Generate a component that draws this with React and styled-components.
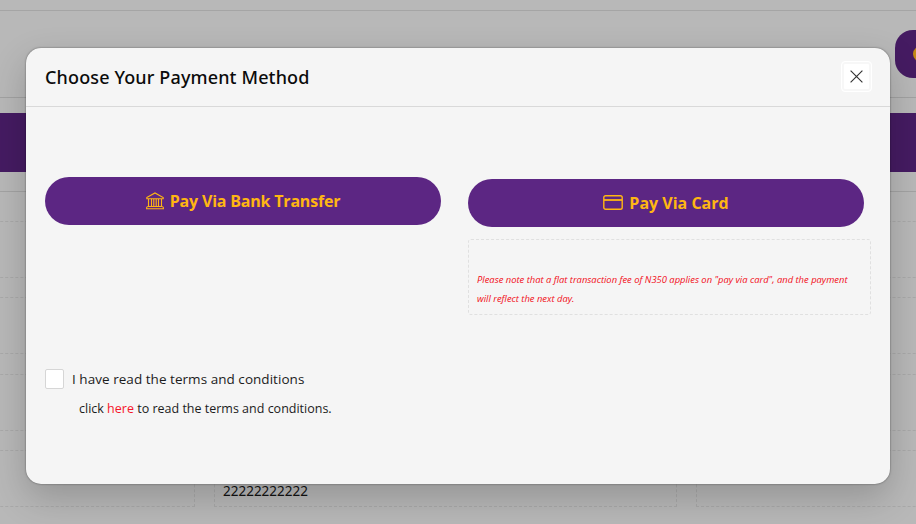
import React from "react";
import styled, { createGlobalStyle } from "styled-components";

const GlobalStyle = createGlobalStyle`
  * { box-sizing: border-box; }
  html, body, #root { height: 100%; }
  body {
    margin: 0;
    overflow: hidden;
    font-family: "Open Sans", "Noto Sans", sans-serif;
    color: #111;
  }
`;

const Page = styled.div`
  position: relative;
  height: 524px;
  overflow: hidden;
  background: #b8b8b8;
`;

const TopStrip = styled.div`
  height: 11px;
  border-bottom: 1px solid #a5a5a5;
`;

const PageHeader = styled.header`
  height: 87px;
  padding-top: 19px;
  display: flex;
  justify-content: flex-end;
  border-bottom: 1px solid #a2a2a2;
`;

const AccountPill = styled.div`
  width: 21px;
  height: 48px;
  padding: 15px 0 0 18px;
  overflow: hidden;
  border-radius: 18px 0 0 18px;
  background: #451b62;
`;

const PillDot = styled.div`
  width: 20px;
  height: 18px;
  border-radius: 50%;
  background: #c28a16;
`;

const Banner = styled.div`
  height: 59px;
  margin-top: 15px;
  background: #451b62;
`;

const Details = styled.section`
  height: 340px;
  margin: 19px -20px 0;
  padding-top: 29px;
  border-top: 1px solid #a3a3a3;
  display: grid;
  grid-template-columns: 215px 463px 260px;
  grid-auto-rows: 57px;
  column-gap: 19px;
  row-gap: 19.4px;
`;

const DetailCell = styled.div`
  padding: 30px 8px 0;
  border: 1px dashed #a9a9a9;
  font-size: 14px;
  line-height: 20px;
`;

const Digits = styled.span`
  font-family: "Noto Sans", sans-serif;
  font-size: 13.5px;
`;

const Backdrop = styled.div`
  position: absolute;
  inset: 0;
  padding: 48px 26px 40px;
`;

const Modal = styled.div`
  height: 436px;
  border-radius: 15px;
  background: #f5f5f5;
  box-shadow: 0 0 2px rgba(0, 0, 0, 0.5), 0 14px 36px rgba(0, 0, 0, 0.2);
`;

const ModalHeader = styled.div`
  height: 59px;
  padding: 0 18px 0 19px;
  display: flex;
  align-items: center;
  justify-content: space-between;
  border-bottom: 1px solid #d9d9d9;
`;

const Title = styled.h2`
  margin: 0;
  font-family: "Noto Sans", "Open Sans", sans-serif;
  font-size: 18px;
  font-weight: 500;
  letter-spacing: 0.14px;
  line-height: 24px;
  color: #0b0b0b;
`;

const CloseButton = styled.button`
  width: 31px;
  height: 31px;
  margin-top: -2px;
  padding: 0;
  display: grid;
  place-items: center;
  border: 1px solid #fff;
  border-radius: 4px;
  background: #fff;
  box-shadow: inset 0 0 0 2px #f7f7f7;
`;

const ModalBody = styled.div`
  padding: 70px 19px 0;
`;

const Methods = styled.div`
  height: 138px;
  display: grid;
  grid-template-columns: 396px 403px;
  column-gap: 27px;
`;

const CardColumn = styled.div`
  padding-top: 2px;
`;

const PayButton = styled.button`
  width: 396px;
  height: 48px;
  padding: 0;
  display: flex;
  align-items: center;
  justify-content: center;
  gap: 6px;
  border: 0;
  border-radius: 24px;
  background: #5c2683;
  color: #ffb612;
  font-family: "Open Sans", sans-serif;
  font-size: 16px;
  font-weight: 700;
  line-height: 22px;
  letter-spacing: ${(p) => p.$spacing};
`;

const FeeNote = styled.div`
  height: 76px;
  margin-top: 12px;
  padding: 30px 8px 0;
  border: 1px dashed #e0e0e0;
  border-radius: 3px;
  color: #f20d18;
  font-size: 9.4px;
  font-style: italic;
  line-height: 19px;
  white-space: nowrap;
`;

const NoteLine = styled.div``;

const TermsRow = styled.label`
  margin-top: 54px;
  height: 20px;
  display: flex;
  align-items: center;
  gap: 8px;
  font-size: 13.5px;
  color: #1c1c1c;
`;

const CheckBox = styled.span`
  width: 19px;
  height: 20px;
  border: 1px solid #d6d6d6;
  border-radius: 2px;
  background: #fff;
`;

const TermsLabel = styled.span`
  line-height: 20px;
  padding-bottom: 1px;
  letter-spacing: 0.04px;
`;

const TermsHint = styled.p`
  margin: 10px 0 0 34px;
  font-size: 12.5px;
  line-height: 20px;
  color: #1c1c1c;
`;

const TermsLink = styled.a`
  color: #f5142a;
`;

const BankIcon = () => (
  <svg width="18" height="18" viewBox="0 0 18 18" fill="none" stroke="currentColor" strokeWidth="1.1">
    <path d="M.8 5.6 9 1l8.2 4.6v1.2H.8zM2.5 7v7.5M5.5 7v7.5M7.8 7v7.5M10.2 7v7.5M12.5 7v7.5M15.5 7v7.5M1.5 14.5h15M0 16.8h18" />
    <path d="M.7 16.8v-1.4l.8-.9M17.3 16.8v-1.4l-.8-.9" />
  </svg>
);

const CardIcon = () => (
  <svg width="20" height="16" viewBox="0 0 20 16" fill="none" stroke="currentColor" strokeWidth="1.4">
    <rect x=".8" y=".7" width="18.4" height="13.6" rx="1.8" />
    <path d="M1 5h18" strokeWidth="1.8" />
  </svg>
);

const CloseIcon = () => (
  <svg width="13" height="13" viewBox="0 0 13 13" fill="none" stroke="#333" strokeWidth="1.15">
    <path d="m.6.6 11.8 11.8M12.4.6.6 12.4" />
  </svg>
);

const cells = Array.from({ length: 12 }, (_, i) => (i === 10 ? "22222222222" : ""));

export default function App() {
  return (
    <>
      <GlobalStyle />
      <Page>
        <TopStrip />
        <PageHeader>
          <AccountPill><PillDot /></AccountPill>
        </PageHeader>
        <Banner />
        <Details>
          {cells.map((value, i) => (
            <DetailCell key={i}>{value && <Digits>{value}</Digits>}</DetailCell>
          ))}
        </Details>
        <Backdrop>
          <Modal role="dialog" aria-labelledby="payment-title">
            <ModalHeader>
              <Title id="payment-title">Choose Your Payment Method</Title>
              <CloseButton aria-label="Close"><CloseIcon /></CloseButton>
            </ModalHeader>
            <ModalBody>
              <Methods>
                <div>
                  <PayButton $spacing="-0.2px"><BankIcon />Pay Via Bank Transfer</PayButton>
                </div>
                <CardColumn>
                  <PayButton $spacing="0"><CardIcon />Pay Via Card</PayButton>
                  <FeeNote>
                    <NoteLine>Please note that a flat transaction fee of N350 applies on "pay via card", and the payment</NoteLine>
                    <NoteLine>will reflect the next day.</NoteLine>
                  </FeeNote>
                </CardColumn>
              </Methods>
              <TermsRow>
                <CheckBox />
                <TermsLabel>I have read the terms and conditions</TermsLabel>
              </TermsRow>
              <TermsHint>click <TermsLink>here</TermsLink> to read the terms and conditions.</TermsHint>
            </ModalBody>
          </Modal>
        </Backdrop>
      </Page>
    </>
  );
}
